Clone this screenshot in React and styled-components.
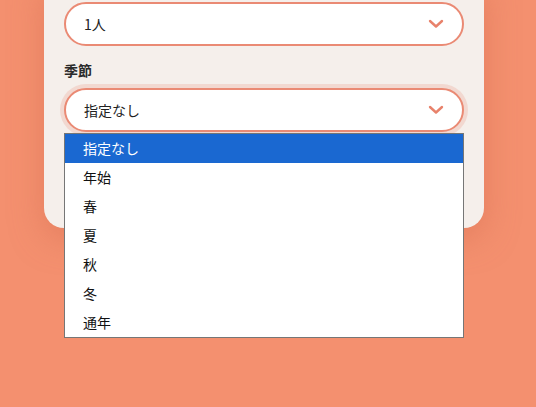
import React from "react";
import styled, { createGlobalStyle } from "styled-components";

const GlobalStyle = createGlobalStyle`
  html, body {
    margin: 0;
    padding: 0;
    height: 100%;
    overflow: hidden;
  }
  body {
    background: #f4906f;
    font-family: "Noto Sans CJK JP", "Noto Sans", sans-serif;
    color: #222;
  }
`;

const Page = styled.div`
  height: 407px;
  padding: 0 52px 0 44px;
`;

const Card = styled.div`
  width: 440px;
  box-sizing: border-box;
  margin-top: -20px;
  padding: 22px 20px 96px;
  background: #f5efeb;
  border-radius: 0 0 20px 20px;
  box-shadow: 0 10px 32px rgba(214, 110, 80, 0.5);
`;

const Field = styled.div`
  position: relative;
  margin-bottom: ${(p) => (p.last ? "0" : "14px")};
`;

const Label = styled.div`
  font-size: 14px;
  font-weight: 700;
  line-height: 20px;
  color: #2b2b2b;
  margin-bottom: 8px;
`;

const SelectBox = styled.div`
  height: 44px;
  box-sizing: border-box;
  border: 2px solid #ea8a74;
  border-radius: 22px;
  background: #fff;
  display: flex;
  align-items: center;
  justify-content: space-between;
  padding: 0 18px;
  font-size: 14px;
  color: #222;
  box-shadow: ${(p) => (p.focused ? "0 0 0 4px rgba(234, 138, 116, 0.22)" : "none")};
`;

const Options = styled.ul`
  position: absolute;
  left: 0;
  right: 0;
  top: calc(100% + 1px);
  margin: 0;
  padding: 0;
  list-style: none;
  background: #fff;
  border: 1px solid #767676;
  z-index: 2;
`;

const Option = styled.li`
  height: 29px;
  line-height: 29px;
  padding-left: 18px;
  font-size: 14px;
  color: ${(p) => (p.active ? "#fff" : "#111")};
  background: ${(p) => (p.active ? "#1a68d1" : "#fff")};
`;

const Chevron = () => (
  <svg width="16" height="10" viewBox="0 0 16 10" fill="none">
    <path
      d="M2 2l6 5.5L14 2"
      stroke="#e8826b"
      strokeWidth="2.4"
      strokeLinecap="round"
      strokeLinejoin="round"
    />
  </svg>
);

const seasons = ["指定なし", "年始", "春", "夏", "秋", "冬", "通年"];

export default function App() {
  return (
    <>
      <GlobalStyle />
      <Page>
        <Card>
          <Field>
            <SelectBox>
              <span>1人</span>
              <Chevron />
            </SelectBox>
          </Field>
          <Label>季節</Label>
          <Field last>
            <SelectBox focused>
              <span>指定なし</span>
              <Chevron />
            </SelectBox>
            <Options>
              {seasons.map((s, i) => (
                <Option key={s} active={i === 0}>
                  {s}
                </Option>
              ))}
            </Options>
          </Field>
        </Card>
      </Page>
    </>
  );
}
